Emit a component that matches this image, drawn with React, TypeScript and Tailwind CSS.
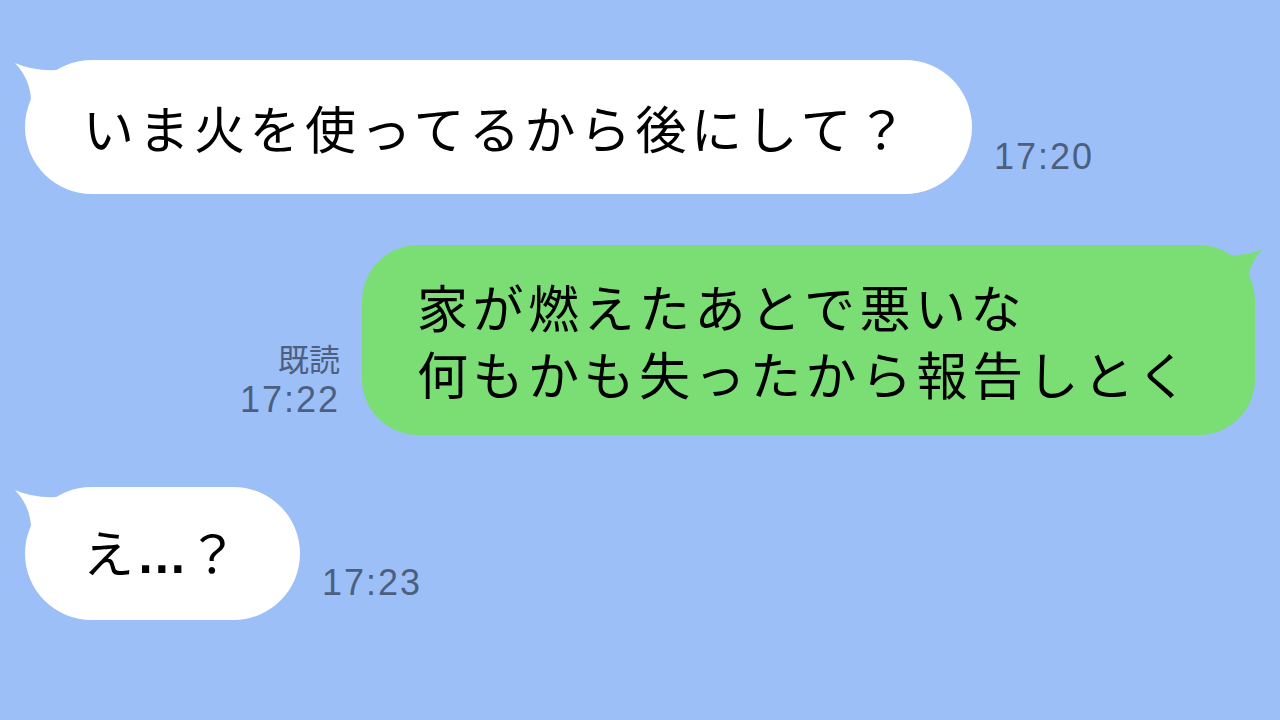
import React from 'react'

const jp = { fontFamily: '"Noto Sans CJK JP", "Noto Sans", sans-serif' }
const latin = { fontFamily: '"Liberation Sans", Arial, sans-serif' }

const LeftTail = () => (
  <svg className="absolute left-[-12px] top-0" width="60" height="50" viewBox="0 0 60 50">
    <path d="M2 3 Q24 13 55 9 L55 45 L18 42 Q18 20 2 3 Z" fill="#ffffff" />
  </svg>
)

const RightTail = () => (
  <svg className="absolute right-[-10px] top-0" width="60" height="50" viewBox="0 0 60 50">
    <path d="M58 4 Q36 14 5 8 L5 45 L42 42 Q42 20 58 4 Z" fill="#7bde75" />
  </svg>
)

const Time = ({ children }: { children: React.ReactNode }) => (
  <span className="block text-[36px] leading-[30px] tracking-[2px] text-[#4c5f80]" style={latin}>
    {children}
  </span>
)

export default function App() {
  return (
    <div className="w-[1280px] h-[720px] bg-[#9dbff8] flex flex-col pt-[60px] overflow-hidden" style={jp}>
      {/* incoming */}
      <div className="flex items-end pl-[25px]">
        <div className="relative">
          <LeftTail />
          <div className="relative w-[947px] h-[134px] bg-white rounded-full flex items-center pl-[58px]">
            <span className="text-[51px] tracking-[4.5px] text-black leading-none">いま火を使ってるから後にして？</span>
          </div>
        </div>
        <div className="ml-[22px] mb-[22px]">
          <Time>17:20</Time>
        </div>
      </div>

      {/* outgoing */}
      <div className="flex items-end justify-end pr-[25px] mt-[51px]">
        <div className="flex flex-col items-end mr-[22px] mb-[20px] gap-[12px]">
          <span className="block text-[31px] leading-[30px] text-[#4c5f80]">既読</span>
          <Time>17:22</Time>
        </div>
        <div className="relative">
          <RightTail />
          <div className="relative w-[893px] h-[190px] bg-[#7bde75] rounded-[56px] flex flex-col justify-center pl-[55px] gap-[16px]">
            <span className="text-[51px] tracking-[4.5px] text-black leading-none">家が燃えたあとで悪いな</span>
            <span className="text-[51px] tracking-[4.5px] text-black leading-none">何もかも失ったから報告しとく</span>
          </div>
        </div>
      </div>

      {/* incoming */}
      <div className="flex items-end pl-[25px] mt-[52px]">
        <div className="relative">
          <LeftTail />
          <div className="relative w-[275px] h-[133px] bg-white rounded-full flex items-center pl-[58px]">
            <span className="text-[51px] tracking-[4.5px] text-black leading-none">
              え<span className="font-bold tracking-[2px]" style={latin}>...</span>？
            </span>
          </div>
        </div>
        <div className="ml-[22px] mb-[22px]">
          <Time>17:23</Time>
        </div>
      </div>
    </div>
  )
}
